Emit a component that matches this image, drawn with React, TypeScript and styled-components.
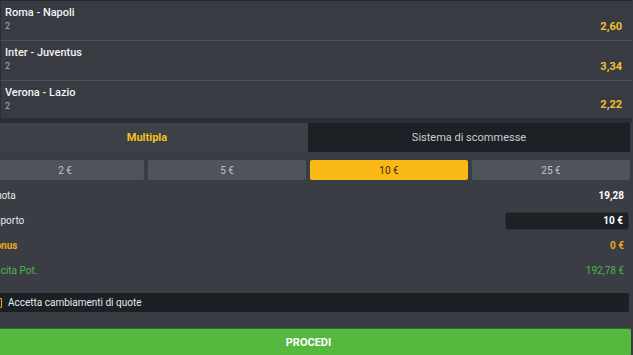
import React, { useState } from "react";
import styled, { createGlobalStyle } from "styled-components";

const GlobalStyle = createGlobalStyle`
  html, body {
    margin: 0;
    padding: 0;
    background: #3a3d44;
    font-family: Roboto, "Liberation Sans", Arial, sans-serif;
  }
`;

type Match = { id: number; title: string; pick: string; odd: string };

const matches: Match[] = [
  { id: 1, title: "Roma - Napoli", pick: "2", odd: "2,60" },
  { id: 2, title: "Inter - Juventus", pick: "2", odd: "3,34" },
  { id: 3, title: "Verona - Lazio", pick: "2", odd: "2,22" },
];

const stakes = [2, 5, 10, 25];

const App = () => {
  const [tab, setTab] = useState("multipla");
  const [stake, setStake] = useState(10);

  return (
    <>
      <GlobalStyle />
      <Page>
        <MatchList>
          {matches.map((m) => (
            <MatchRow key={m.id}>
              <MatchInfo>
                <MatchTitle>{m.title}</MatchTitle>
                <MatchPick>{m.pick}</MatchPick>
              </MatchInfo>
              <MatchOdd>{m.odd}</MatchOdd>
            </MatchRow>
          ))}
        </MatchList>

        <BetPanel>
          <Tabs>
            <Tab $active={tab === "multipla"} onClick={() => setTab("multipla")}>
              Multipla
            </Tab>
            <Tab $active={tab === "sistema"} onClick={() => setTab("sistema")}>
              Sistema di scommesse
            </Tab>
          </Tabs>

          <StakeGrid>
            {stakes.map((s) => (
              <StakeButton key={s} $active={stake === s} onClick={() => setStake(s)}>
                {s} €
              </StakeButton>
            ))}
          </StakeGrid>

          <InfoList>
            <InfoRow>
              <Label>Quota</Label>
              <Value>19,28</Value>
            </InfoRow>
            <InfoRow>
              <Label>Importo</Label>
              <AmountBox>{stake} €</AmountBox>
            </InfoRow>
            <InfoRow>
              <Label $tone="bonus">Bonus</Label>
              <Value $tone="bonus">0 €</Value>
            </InfoRow>
            <InfoRow>
              <Label $tone="win">Uscita Pot.</Label>
              <Value $tone="win">192,78 €</Value>
            </InfoRow>
          </InfoList>

          <AcceptBar>
            <CheckBox />
            <AcceptText>Accetta cambiamenti di quote</AcceptText>
          </AcceptBar>

          <ProceedButton>PROCEDI</ProceedButton>
        </BetPanel>
      </Page>
    </>
  );
};

export default App;

// layout

const Page = styled.div`
  width: 633px;
  height: 355px;
  overflow: hidden;
  background: #3a3d44;
`;

// match list

const MatchList = styled.div`
  width: 632px;
  border-top: 1px solid #25282d;
  border-left: 1px solid #2a2d32;
  border-bottom: 5px solid #2b2e34;
  box-sizing: border-box;
`;

const MatchRow = styled.div`
  display: flex;
  justify-content: space-between;
  height: 40px;
  box-sizing: border-box;
  padding: 4px 10px 0 4px;
  background: #383b42;
  border-bottom: 1px solid #4c5057;

  &:last-child {
    border-bottom: none;
    height: 37px;
  }
`;

const MatchInfo = styled.div`
  display: flex;
  flex-direction: column;
`;

const MatchTitle = styled.span`
  font-size: 11px;
  line-height: 15px;
  font-weight: 500;
  color: #f2f3f5;
`;

const MatchPick = styled.span`
  font-size: 9px;
  line-height: 12px;
  color: #a9acb2;
`;

const MatchOdd = styled.span`
  align-self: flex-end;
  margin-bottom: 7px;
  font-size: 11px;
  font-weight: 700;
  color: #f2c12e;
`;

// bet panel

const BetPanel = styled.div`
  width: 644px;
  margin-left: -14px;
  display: flex;
  flex-direction: column;
`;

const Tabs = styled.div`
  display: grid;
  grid-template-columns: 1fr 1fr;
  height: 29px;
`;

const Tab = styled.div<{ $active?: boolean }>`
  display: flex;
  align-items: center;
  justify-content: center;
  font-size: 11px;
  font-weight: ${(p) => (p.$active ? 700 : 400)};
  color: ${(p) => (p.$active ? "#f5c020" : "#c9ccd2")};
  background: ${(p) => (p.$active ? "#3c4047" : "#1d2025")};
  cursor: pointer;
`;

const StakeGrid = styled.div`
  display: grid;
  grid-template-columns: repeat(4, 1fr);
  gap: 4px;
  margin-top: 8px;
`;

const StakeButton = styled.div<{ $active?: boolean }>`
  display: flex;
  align-items: center;
  justify-content: center;
  height: 20px;
  border-radius: 2px;
  font-size: 10px;
  color: ${(p) => (p.$active ? "#3a2c05" : "#c1c4c9")};
  background: ${(p) => (p.$active ? "#fbb917" : "#4f535a")};
  cursor: pointer;
`;

const InfoList = styled.div`
  display: flex;
  flex-direction: column;
  margin-top: 3px;
`;

const InfoRow = styled.div`
  display: flex;
  align-items: center;
  justify-content: space-between;
  height: 25px;
  padding: 0 6px 0 3px;
`;

const toneColor = (tone?: string) =>
  tone === "bonus" ? "#eba81f" : tone === "win" ? "#4fb548" : "#e4e6ea";

const Label = styled.span<{ $tone?: string }>`
  font-size: 10px;
  font-weight: ${(p) => (p.$tone === "bonus" ? 700 : 400)};
  color: ${(p) => toneColor(p.$tone)};
`;

const Value = styled.span<{ $tone?: string }>`
  font-size: 10px;
  font-weight: ${(p) => (p.$tone === "win" ? 400 : 700)};
  color: ${(p) => (p.$tone ? toneColor(p.$tone) : "#ffffff")};
`;

const AmountBox = styled.div`
  width: 124px;
  height: 18px;
  margin-right: -5px;
  box-sizing: border-box;
  padding-right: 5px;
  display: flex;
  align-items: center;
  justify-content: flex-end;
  background: #1d2025;
  border: 1px solid #2c2f35;
  border-radius: 3px;
  font-size: 10px;
  font-weight: 700;
  color: #ffffff;
`;

const AcceptBar = styled.div`
  display: flex;
  align-items: center;
  gap: 6px;
  height: 19px;
  margin-top: 10px;
  margin-right: 1px;
  padding-left: 6px;
  background: #1c1f23;
  border-radius: 2px;
`;

const CheckBox = styled.span`
  width: 10px;
  height: 10px;
  box-sizing: border-box;
  border: 1px solid #f0b90b;
  border-radius: 1px;
`;

const AcceptText = styled.span`
  font-size: 10px;
  color: #e6e8eb;
`;

const ProceedButton = styled.button`
  height: 28px;
  margin-top: 16px;
  margin-right: -1px;
  border: none;
  border-top: 1px solid #2f6e24;
  border-radius: 2px;
  background: #55b93f;
  color: #ffffff;
  font-family: inherit;
  font-size: 11px;
  font-weight: 700;
  cursor: pointer;
`;
